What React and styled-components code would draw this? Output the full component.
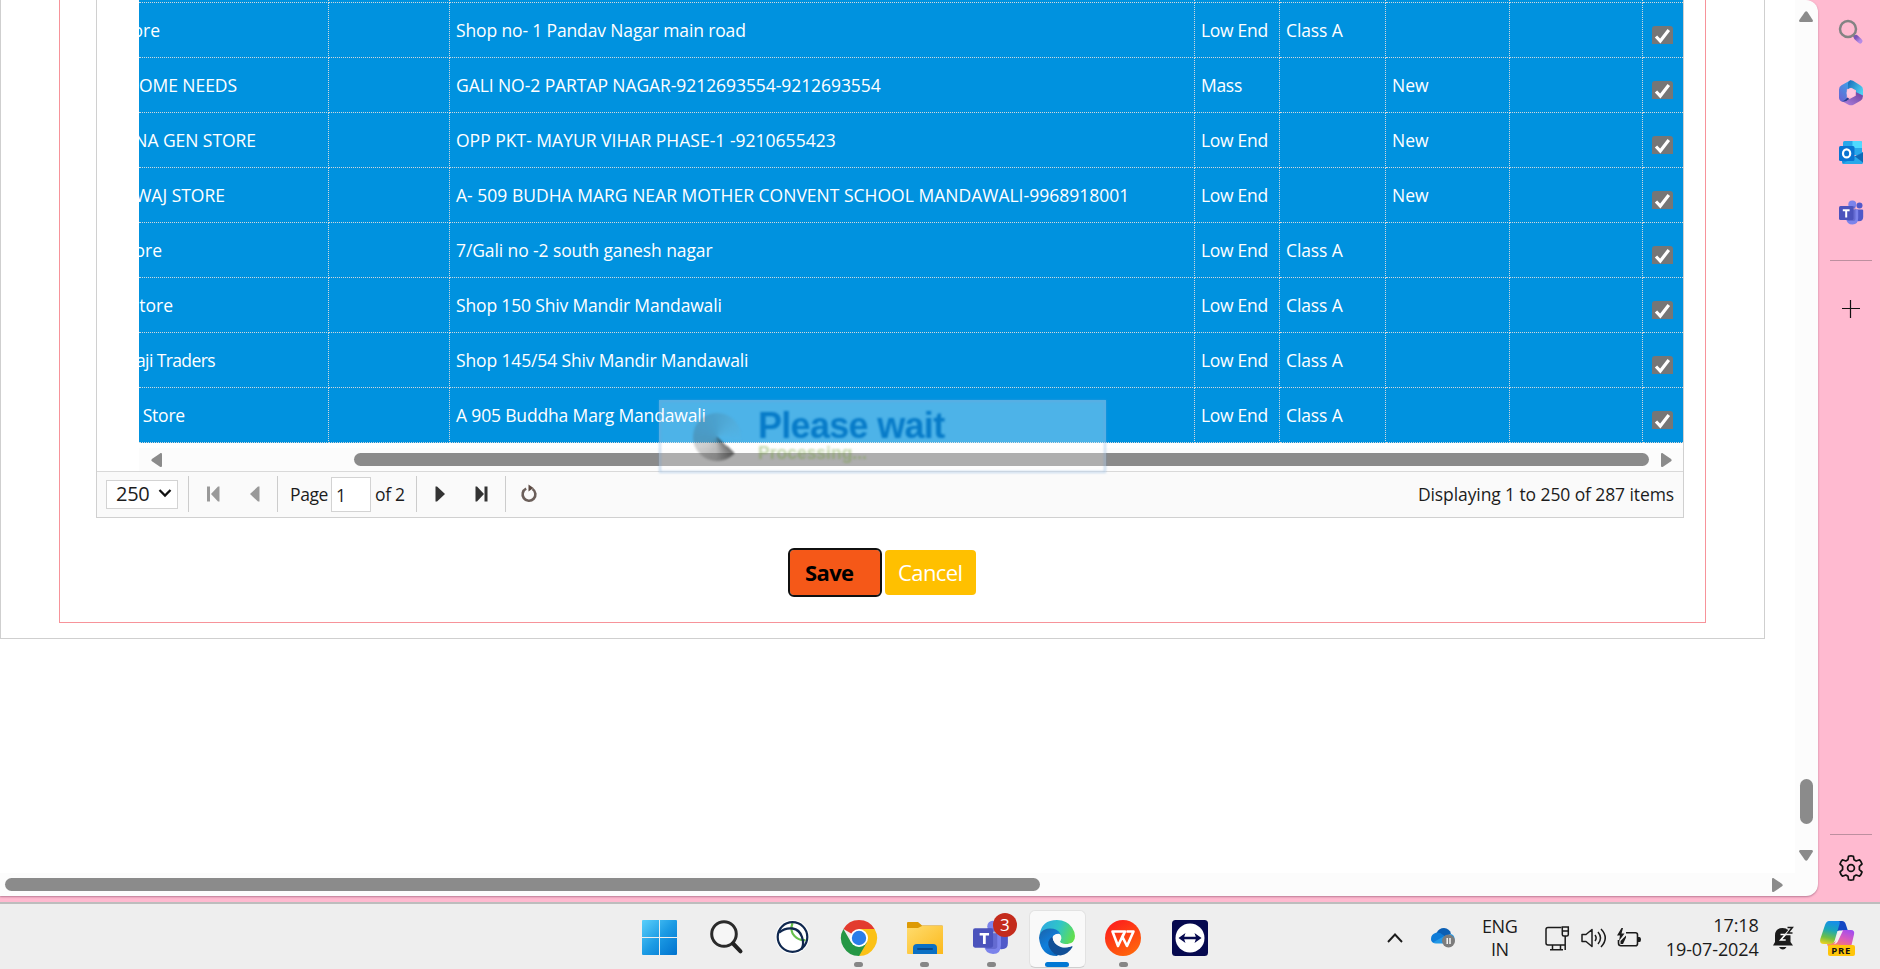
import React from "react";
import styled, { createGlobalStyle, css } from "styled-components";

const GlobalStyle = createGlobalStyle`
  * { box-sizing: border-box; }
  body { margin: 0; overflow: hidden; font-family: "Open Sans", "Noto Sans", sans-serif; }
  svg { display: block; flex: none; overflow: visible; }
`;

const Screen = styled.div`
  width: 1880px;
  height: 969px;
  display: flex;
  flex-direction: column;
  overflow: hidden;
  background: #eeeeee;
`;

/* ---------- browser ---------- */
const Browser = styled.div`
  height: 904px;
  flex: none;
  display: flex;
  align-items: flex-start;
  background: #ffbad0;
  border-bottom: 2px solid #bdbdbd;
`;

const PageWindow = styled.div`
  width: 1818px;
  height: 896px;
  display: grid;
  grid-template-columns: 1795px 23px;
  grid-template-rows: 873px 23px;
  background: #fcfcfc;
  border-radius: 0 12px 12px 0;
  overflow: hidden;
  box-shadow: 0 1px 2px rgba(120, 60, 90, 0.5);
`;

const Viewport = styled.main`
  background: #fff;
  overflow: hidden;
`;

const OuterPanel = styled.section`
  width: 1765px;
  height: 639px;
  padding-left: 58px;
  border: 1px solid #cfcfcf;
  border-top: 0;
`;

const RedFrame = styled.section`
  width: 1647px;
  height: 623px;
  padding-left: 36px;
  border: 1px solid #f7939a;
  border-top: 0;
`;

const GridBox = styled.div`
  width: 1588px;
  height: 518px;
  display: flex;
  flex-direction: column;
  border: 1px solid #d0d0d0;
  border-top: 0;
`;

const GridScroller = styled.div`
  height: 471px;
  flex: none;
  margin-left: 42px;
`;

const Rows = styled.div`
  height: 443px;
  display: flex;
  flex-direction: column;
  justify-content: flex-end;
  overflow: hidden;
`;

const Row = styled.div`
  height: 55px;
  flex: none;
  display: grid;
  grid-template-columns: 190px 121px 745px 85px 106px 124px 133px 40px;
  background: #0092df;
`;

const Cell = styled.div`
  display: flex;
  align-items: center;
  justify-content: ${(p) => (p.$end ? "flex-end" : "flex-start")};
  padding-left: ${(p) => (p.$end ? 0 : "6px")};
  padding-right: ${(p) => p.$end || 0}px;
  min-width: 0;
  overflow: hidden;
  white-space: pre;
  color: #fff;
  font-size: 17.5px;
  letter-spacing: ${(p) => p.$track || 0}px;
  border-right: 1px dotted #d3d8dc;
  border-bottom: 1px dotted #d3d8dc;
  &:last-child { border-right: 0; padding: 7px 0 0 9px; }
`;

const CheckMark = styled.span`
  width: 21px;
  height: 18px;
  margin-top: 2px;
  border-radius: 3px 3px 0 0;
  background: #767676;
`;

const HScroll = styled.div`
  height: 23px;
  margin-top: 5px;
  display: flex;
  align-items: center;
  padding: 0 11px 0 12px;
  background: #fcfcfc;
`;

const HThumb = styled.div`
  width: ${(p) => p.$w}px;
  height: 13px;
  margin-left: ${(p) => p.$gap || 0}px;
  margin-right: auto;
  border-radius: 7px;
  background: #8b8b8b;
`;

const Pager = styled.div`
  flex: 1;
  display: flex;
  align-items: center;
  padding: 0 9px 1px;
  border-top: 1px solid #d9d9d9;
  background: #fafafa;
  color: #1c1c1c;
  font-size: 17.5px;
  white-space: nowrap;
`;

const PageSize = styled.div`
  width: 72px;
  height: 29px;
  display: flex;
  align-items: center;
  justify-content: space-between;
  margin-top: 0;
  padding: 0 5px 2px 9px;
  border: 1px solid #d3d3d3;
  background: #fff;
  font-size: 20px;
  letter-spacing: -0.3px;
`;

const Divider = styled.i`
  width: 1px;
  height: 36px;
  margin: 0 ${(p) => p.$r}px 0 ${(p) => p.$l}px;
  background: #cccccc;
`;

const PageInput = styled.div`
  width: 40px;
  height: 35px;
  margin: 0 4px 0 2px;
  padding: 1px 0 0 4px;
  display: flex;
  align-items: center;
  border: 1px solid #d3d3d3;
  background: #fff;
`;

const PagerText = styled.span`
  letter-spacing: ${(p) => p.$track || 0}px;
  width: ${(p) => (p.$w ? p.$w + "px" : "auto")};
`;

const Gap = styled.span`
  width: ${(p) => p.$w}px;
`;

const Status = styled.span`
  margin-left: auto;
  letter-spacing: -0.1px;
`;

const Actions = styled.div`
  display: flex;
  margin: 32px 0 0 694px;
  gap: 5px;
`;

const button = css`
  height: 45px;
  padding: 0 0 1px;
  border: 0;
  border-radius: 4px;
  font-family: inherit;
  font-size: 22px;
  line-height: 45px;
  text-align: left;
`;

const SaveButton = styled.button`
  ${button}
  width: 90px;
  padding-left: 15px;
  color: #000;
  background: #f55818;
  outline: 2px solid #101010;
  outline-offset: 0;
  font-weight: 700;
  letter-spacing: -0.6px;
`;

const CancelButton = styled.button`
  ${button}
  width: 91px;
  padding-left: 13px;
  color: #fff;
  background: #ffc000;
  letter-spacing: -0.6px;
`;

/* The wait message floats over the grid */
const WaitOverlay = styled.div`
  position: absolute;
  left: 659px;
  top: 400px;
  width: 447px;
  height: 73px;
  display: flex;
  align-items: flex-start;
  padding: 10px 0 0 34px;
  background: rgba(255, 255, 255, 0.3);
  font-family: "Liberation Sans", Arial, sans-serif;
  font-weight: 700;
  &::after {
    content: "";
    position: absolute;
    inset: 0;
    border: 2px solid rgba(115, 165, 215, 0.4);
    filter: blur(1px);
  }
`;

const Spinner = styled.div`
  width: 48px;
  height: 48px;
  margin-top: 3px;
  border-radius: 50%;
  filter: blur(0.9px);
  background: conic-gradient(
    from 132deg,
    rgba(25, 25, 25, 0.62) 0deg,
    rgba(60, 60, 60, 0.35) 50deg,
    rgba(75, 75, 75, 0.26) 110deg,
    rgba(70, 100, 120, 0.3) 160deg,
    rgba(70, 110, 130, 0.26) 220deg,
    rgba(110, 150, 165, 0.16) 280deg,
    rgba(150, 200, 220, 0.05) 320deg,
    transparent 340deg
  );
`;

const WaitText = styled.div`
  display: flex;
  flex-direction: column;
  margin-left: 17px;
  filter: blur(0.8px);
`;

const WaitTitle = styled.span`
  margin-top: -1px;
  font-size: 36px;
  line-height: 34px;
  letter-spacing: -0.7px;
  color: #077bc8;
`;

const WaitSub = styled.span`
  font-size: 17.5px;
  line-height: 20px;
  letter-spacing: 0;
  color: rgba(105, 155, 40, 0.38);
`;

const VScroll = styled.div`
  display: flex;
  flex-direction: column;
  align-items: center;
  padding: 11px 1px 12px 0;
`;

const VThumb = styled.div`
  width: 13px;
  height: 45px;
  margin: auto 0 26px;
  border-radius: 7px;
  background: #8b8b8b;
`;

const PageHScroll = styled.div`
  display: flex;
  align-items: center;
  padding: 0 12px 0 5px;
`;

/* ---------- sidebar ---------- */
const Sidebar = styled.aside`
  width: 62px;
  height: 902px;
  display: flex;
  flex-direction: column;
  align-items: center;
  padding: 19px 0 21px 4px;
`;

const SideIcon = styled.div`
  width: 26px;
  height: 26px;
  margin-bottom: ${(p) => p.$mb || 0}px;
  display: flex;
  align-items: center;
  justify-content: center;
`;

const SideRule = styled.hr`
  width: 42px;
  height: 1px;
  flex: none;
  margin: ${(p) => p.$m};
  border: 0;
  background: #bd8f9f;
`;

/* ---------- taskbar ---------- */
const Taskbar = styled.footer`
  height: 65px;
  display: flex;
  background: #eeeeee;
  padding-left: 627px;
  color: #1b1b1b;
`;

const Slot = styled.div`
  position: relative;
  width: 66.2px;
  display: flex;
  flex-direction: column;
  align-items: center;
  padding-top: 16px;
`;

const ActiveTile = styled.div`
  width: 57px;
  height: 58px;
  margin-top: -10px;
  padding-top: 9px;
  display: flex;
  flex-direction: column;
  align-items: center;
  border: 1px solid #e2e2e2;
  border-bottom-color: #cfcfcf;
  border-radius: 6px;
  background: #f9f9f9;
`;

const Running = styled.i`
  width: ${(p) => (p.$active ? 24 : 9)}px;
  height: 5px;
  flex: none;
  margin-top: 6px;
  border-radius: 3px;
  background: ${(p) => (p.$active ? "#0078d4" : "#868686")};
`;

const Badge = styled.span`
  position: absolute;
  left: 35px;
  top: 9px;
  width: 24px;
  height: 24px;
  border-radius: 50%;
  background: #c42b1c;
  color: #fff;
  font-size: 17px;
  line-height: 23px;
  text-align: center;
`;

const Tray = styled.div`
  display: flex;
  align-items: center;
  height: 65px;
  margin-left: 164px;
  padding-top: 3px;
`;

const Language = styled.div`
  width: 40px;
  margin: 0 25px 0 25px;
  text-align: center;
  font-size: 18px;
  line-height: 23px;
  letter-spacing: -0.5px;
`;

const Clock = styled.div`
  width: 100px;
  margin: -3px 14px 0 17px;
  text-align: right;
  font-size: 18px;
  line-height: 24px;
  letter-spacing: -0.1px;
`;

const Copilot = styled.div`
  display: flex;
  flex-direction: column;
  width: 35px;
  height: 35px;
  margin-left: 26px;
`;

const PreTag = styled.span`
  position: relative;
  width: 27px;
  height: 11px;
  margin: -11px 0 0 8px;
  border-radius: 2px;
  background: #ffc50a;
  color: #111;
  font-size: 9.5px;
  font-weight: 700;
  line-height: 11px;
  letter-spacing: 0.8px;
  text-align: center;
`;

/* ---------- drawings ---------- */
const arrows = {
  left: [11, 14, "M11 1.5v11c0 1.5-1 1.8-2 1.2L.9 8.3q-1.3-1.1 0-2.4L9 .4C10-.3 11 0 11 1.5z"],
  right: [11, 14, "M0 1.5v11c0 1.5 1 1.8 2 1.2l8.1-5.4q1.3-1.1 0-2.4L2 .4C1-.3 0 0 0 1.5z"],
  up: [14, 11, "M1.5 11h11c1.5 0 1.8-1 1.2-2L8.5 1q-1.3-1.5-2.6 0L.3 9c-.6 1-.3 2 1.2 2z"],
  down: [14, 11, "M1.5 0h11c1.5 0 1.8 1 1.2 2L8.5 10q-1.3 1.5-2.6 0L.3 2C-.3 1 0 0 1.5 0z"],
};

const Arrow = ({ dir }) => {
  const [w, h, d] = arrows[dir];
  return (
    <svg width={w} height={h} viewBox={`0 0 ${w} ${h}`}>
      <path d={d} fill="#8b8b8b" />
    </svg>
  );
};

const CheckIcon = () => (
  <svg width="21" height="18" viewBox="0 0 21 18">
    <path d="M4 10.500l4.300 4.500L16.800 4" fill="none" stroke="#fff" strokeWidth="3.200" />
  </svg>
);

const PagerIcon = ({ kind }) => {
  const color = kind === "first" || kind === "prev" ? "#999" : "#333";
  return (
    <svg width="16" height="16" viewBox="0 0 16 16" fill={color}>
      {kind === "first" && <path d="M1 .5h3v15H1zM13.500 .5v15H12L5 8l7-7.500z" />}
      {kind === "prev" && <path d="M12.500 .5v15H11L3 8l8-7.500z" />}
      {kind === "next" && <path d="M3.500 .5v15H5L13 8 5 .5z" />}
      {kind === "last" && <path d="M1.500 .5v15H3L10 8 3 .5zM10.500 .5h3v15h-3z" />}
      {kind === "reload" && (
        <g>
          <path d="M5.200 2.600A6.400 6.400 0 1 0 11.500 3" fill="none" stroke="#6b5f5a" strokeWidth="2.600" />
          <path d="M7.500-1.500v7L12.500 2z" fill="#5c4a43" />
        </g>
      )}
    </svg>
  );
};

const SearchGlass = () => (
  <svg width="26" height="26" viewBox="0 0 26 26">
    <defs>
      <linearGradient id="handle" x1="0" y1="0" x2="1" y2="1">
        <stop offset="0" stopColor="#7a55b8" />
        <stop offset="1" stopColor="#b68be6" />
      </linearGradient>
    </defs>
    <path d="M15 16l4 4" stroke="#777" strokeWidth="2" />
    <circle cx="10" cy="10" r="8" fill="none" stroke="#838383" strokeWidth="2.500" />
    <path d="M18.200 18.500l3.800 3.500" stroke="url(#handle)" strokeWidth="5" strokeLinecap="round" />
  </svg>
);

const Office = () => (
  <svg width="26" height="26" viewBox="0 0 26 26">
    <defs>
      <linearGradient id="offA" x1="0" y1="1" x2=".6" y2="0">
        <stop offset="0" stopColor="#6d5fd0" />
        <stop offset="1" stopColor="#3d9fe8" />
      </linearGradient>
      <linearGradient id="offB" x1="0" y1="0" x2="1" y2=".6">
        <stop offset="0" stopColor="#1769b8" />
        <stop offset="1" stopColor="#4fd2f2" />
      </linearGradient>
      <linearGradient id="offC" x1="0" y1="1" x2="1" y2="0">
        <stop offset="0" stopColor="#b082e0" />
        <stop offset="1" stopColor="#6a3f9e" />
      </linearGradient>
    </defs>
    <path d="M13 0l-9.500 5.300Q1 6.800 1 9.500v8q0 3 3 4.200 2 .5 3.800-.7l2-1.300-1-2V9.500l4.200-2.700z" fill="url(#offA)" />
    <path d="M10 3v6l3-1.200 5 2.500v6l5.500 1.500Q25 17 25 15V9.500q0-2.700-2.500-4L15 .8Q11-.8 10 3z" fill="url(#offB)" />
    <path d="M4 21.200q3.500.8 5.500-1l3.500-2 4.800-2.500V12l7.200 3.500q0 3.700-2.500 5.200l-7 4q-2.500 1.300-5 0z" fill="url(#offC)" />
    <path d="M4 21.200q3.500.8 5.500-1l2-1.200-2-1.500-2 2q-1.500 1.500-3.500 1.700z" fill="#2a3c91" />
    <circle cx="13" cy="13" r="4.400" fill="#ffc7e0" />
  </svg>
);

const Outlook = () => (
  <svg width="26" height="26" viewBox="0 0 26 26">
    <rect x="5" y="1" width="19" height="14" rx="1.500" fill="#28a8ea" />
    <path d="M14.500 1h8q1.500 0 1.500 1.500V8h-9.500z" fill="#50d9ff" />
    <path d="M5 8h9.500v6H5z" fill="#0364b8" />
    <path d="M4 13l11 4 10-5v10q0 2-2 2H6q-2 0-2-2z" fill="#1490df" />
    <path d="M4 24L25 12.500V22q0 2-2 2z" fill="#28a8ea" />
    <path d="M17 16.500l8 6V12.500z" fill="#1068b5" />
    <rect x="1" y="6" width="15.500" height="15" rx="1.500" fill="#0a74d1" />
    <ellipse cx="8.600" cy="13.400" rx="3.600" ry="4" fill="none" stroke="#fff" strokeWidth="2.200" />
  </svg>
);

const Teams = ({ size, big }) => (
  <svg width={size} height={size} viewBox="0 0 26 26">
    <circle cx="21.500" cy="5.500" r="3" fill="#5059c9" />
    <circle cx="14.300" cy="4.500" r="4" fill="#7b83eb" />
    <path d="M17 9.500h7q1.200 0 1.200 1.200v6q0 4.500-4.500 4.500-2.500 0-4-1.500z" fill="#5059c9" />
    <path d="M8 9.500h11q1.200 0 1.200 1.300V18q0 6.500-5.700 6.500T8 18.500z" fill="#7b83eb" />
    <path d="M10 6h5q2.500 0 2.500 2v11q0 2-2 2H9.500z" fill="#3940a0" opacity=".35" />
    <rect x={big ? 0 : 1} y="6" width="14.500" height="14" rx="1.500" fill="#4b53bc" />
    <path d="M4.800 9.300h6.800v1.900H9.200v6.200H7.200v-6.200H4.800z" fill="#fff" />
  </svg>
);

const Plus = () => (
  <svg width="18" height="18" viewBox="0 0 18 18">
    <path d="M8.500 0v18M0 8.500h18" stroke="#111" strokeWidth="1.200" />
  </svg>
);

const Gear = () => (
  <svg width="24" height="26" viewBox="0 0 24 26" fill="none" stroke="#111" strokeWidth="1.700" strokeLinejoin="round">
    <path d="M9.600 1.200Q12 .600 14.400 1.200L15 4.700 17.200 6 20.600 4.800Q22.400 6.600 23 9L20.400 11.300V14.700L23 17Q22.400 19.400 20.600 21.200L17.200 20 15 21.300 14.400 24.800Q12 25.400 9.600 24.800L9 21.300 6.800 20 3.400 21.200Q1.600 19.400 1 17L3.600 14.700V11.300L1 9Q1.600 6.600 3.400 4.800L6.800 6 9 4.700z" />
    <circle cx="12" cy="13" r="3.400" />
  </svg>
);

const WindowsLogo = () => (
  <svg width="36" height="35" viewBox="0 0 36 35">
    <defs>
      <linearGradient id="win" x1="0" y1="0" x2="35" y2="35" gradientUnits="userSpaceOnUse">
        <stop offset="0" stopColor="#5ad0fb" />
        <stop offset=".5" stopColor="#1c9be4" />
        <stop offset="1" stopColor="#0072ce" />
      </linearGradient>
    </defs>
    <path d="M1 0h16v17H0V1q0-1 1-1zM18 0h16q1 0 1 1v16H18zM0 18h17v17H1q-1 0-1-1zM18 18h17v16q0 1-1 1H18z" fill="url(#win)" />
  </svg>
);

const TaskSearch = () => (
  <svg width="32" height="34" viewBox="0 0 32 34">
    <circle cx="14" cy="14" r="12.300" fill="#f6f6f6" stroke="#2b2b2b" strokeWidth="3" />
    <path d="M23 23.500l7.500 7.800" stroke="#222" strokeWidth="4" strokeLinecap="round" />
  </svg>
);

const Globe = () => (
  <svg width="34" height="34" viewBox="-0.500 0 34 34">
    <circle cx="17" cy="17" r="17" fill="#fff" />
    <path d="M17 3q-3 8 2 13t11 4" fill="none" stroke="#67c04b" strokeWidth="2.200" />
    <circle cx="17" cy="17" r="14.800" fill="none" stroke="#10284f" strokeWidth="2.200" />
    <path d="M3.500 12.500Q10 7.500 17 8.500T26.500 17t-.7 12.500" fill="none" stroke="#10284f" strokeWidth="2.300" />
  </svg>
);

const Chrome = () => (
  <svg width="36" height="36" viewBox="0 0 36 36">
    <path d="M18 18L2.410 9A18 18 0 0 1 33.590 9z" fill="#e33b2e" />
    <path d="M18 9H33.590A18 18 0 0 1 18 36l7.790-13.500z" fill="#fbc116" />
    <path d="M10.200 22.500L2.410 9A18 18 0 0 0 18 36l7.790-13.500z" fill="#259745" />
    <path d="M18 18l7.790 4.500L18 36z" fill="#fbc116" />
    <path d="M18 9h15.590l-5 9H18z" fill="#fbc116" />
    <path d="M18 26.500l7.790-4L18 36l-3-9z" fill="#259745" />
    <circle cx="18" cy="18" r="9" fill="#fff" />
    <circle cx="18" cy="18" r="7.200" fill="#2b7de9" />
  </svg>
);

const Folder = () => (
  <svg width="36" height="36" viewBox="0 0 36 36">
    <defs>
      <linearGradient id="fold" x1="0" y1="0" x2="1" y2="1">
        <stop offset="0" stopColor="#ffdc6e" />
        <stop offset="1" stopColor="#fcb91c" />
      </linearGradient>
    </defs>
    <path d="M0 3q0-1 1-1h10l4 3.500h20q1 0 1 1V15H0z" fill="#dd9a05" />
    <path d="M0 8h11l4-2h21v28H1q-1 0-1-1z" fill="url(#fold)" />
    <path d="M6 34V28q0-4 4-4h16q4 0 4 4v6z" fill="#0c70c4" />
    <path d="M11 29h14" stroke="#084a8c" strokeWidth="2" strokeLinecap="round" />
  </svg>
);

const Edge = () => (
  <svg width="36" height="36" viewBox="0 0 36 36">
    <defs>
      <linearGradient id="edTop" x1="0" y1=".3" x2="1" y2=".6">
        <stop offset="0" stopColor="#2fa9e0" />
        <stop offset=".5" stopColor="#2fc5c8" />
        <stop offset="1" stopColor="#62df4c" />
      </linearGradient>
      <linearGradient id="edBlue" x1="0" y1="0" x2=".6" y2="1">
        <stop offset="0" stopColor="#1c62a8" />
        <stop offset=".6" stopColor="#0f7fdc" />
        <stop offset="1" stopColor="#0a6ac0" />
      </linearGradient>
    </defs>
    <path d="M.5 15Q2.500 0 18 0q10 0 15 7.500Q36 12 36 16q0 7-7.500 8-5 .3-7-1.200-1-1 .3-2.800 1.500-3.500-1.300-6-2.500-3.300-8-3.500Q5 10.500.5 15z" fill="url(#edTop)" />
    <path d="M0 18q.5-7.500 8-9.300Q18 7.500 21.500 14q-6-1.200-8 4.500-2 9 6.500 15.500l-2 2Q2 36 0 18z" fill="url(#edBlue)" />
    <path d="M13.500 16.500Q7 21 10.500 28q4 7.500 11 7.500 8-1.500 12-8.500.3-1.200-1-.7-5 2-10.500.2-8-3-8.500-10z" fill="#114f97" />
    <path d="M18 14.200q4 .2 4.200 4 0 1-.9 2.300-.8 1.300.3 2.300 2 1.700 6.500 1.400 4.500-.3 6-2-.3 3-2 4-6 2.700-11.500.2-6.500-3-7-9 .5-3 4.400-3.200z" fill="#fafafa" />
  </svg>
);

const Wps = () => (
  <svg width="36" height="36" viewBox="0 0 36 36">
    <defs>
      <linearGradient id="wps" x1=".2" y1="0" x2=".8" y2="1">
        <stop offset="0" stopColor="#fd1c1c" />
        <stop offset="1" stopColor="#ff6a0b" />
      </linearGradient>
    </defs>
    <circle cx="18" cy="18" r="18" fill="url(#wps)" />
    <path d="M14.500 11.500H7.500L13 26l5.500-12M13 11.500h7L17.500 17 22 26l6.500-14.500h-7" fill="none" stroke="#fff" strokeWidth="2.600" strokeLinejoin="round" />
  </svg>
);

const TeamViewer = () => (
  <svg width="36" height="36" viewBox="0 0 36 36">
    <rect width="36" height="36" rx="3.500" fill="#06094f" />
    <circle cx="18" cy="18" r="14.500" fill="#fff" />
    <path d="M6.500 18l7-5-1.300 3.700h11.600L22.500 13l7 5-7 5 1.300-3.700H12.200l1.300 3.700z" fill="#06094f" />
  </svg>
);

const Chevron = () => (
  <svg width="16" height="10" viewBox="0 0 16 10">
    <path d="M1 9l7-7.500L15 9" fill="none" stroke="#1b1b1b" strokeWidth="1.900" />
  </svg>
);

const OneDrive = () => (
  <svg width="24" height="20" viewBox="0 0 24 20">
    <path d="M5.500 5Q8 0 13 0q5.500.500 7 5.500l-6 5z" fill="#0b5fb4" />
    <path d="M0 11Q0 6 5 4.700q4-.500 7 2.300l6 3.500L3 15Q0 14 0 11z" fill="#0e7cd8" />
    <path d="M2 14.500L12.500 8.500 20 6q3.500 1 3.500 4.500 0 5-4 5H5q-2 0-3-1z" fill="#2499e6" />
    <circle cx="17.500" cy="13" r="6.500" fill="#7c7c7c" />
    <path d="M16.200 10v6M19 10v6" stroke="#fff" strokeWidth="1.400" />
  </svg>
);

const Monitor = () => (
  <svg width="24" height="25" viewBox="0 0 24 25" fill="none" stroke="#1b1b1b" strokeWidth="1.500">
    <path d="M16.500 1.500H3Q1 1.500 1 3.500V17q0 2 2 2h17.500M7.500 19.500V23.500M15.500 19.500V23.500M5 23.800h13M20.200 10v14" />
    <path d="M17.300 1h6v7.500q0 1.500-1.500 1.500h-3q-1.500 0-1.500-1.500zM17.500 5h5.500" />
  </svg>
);

const Speaker = () => (
  <svg width="25" height="20" viewBox="0 0 25 20" fill="none" stroke="#1b1b1b" strokeWidth="1.500" strokeLinejoin="round">
    <path d="M1 6.500h4L11 1.500v17L5 13.500H1z" />
    <path d="M14 7q2.300 3 0 6M17 4q5 6 0 12M20 1q8.500 9 0 18" />
  </svg>
);

const Battery = () => (
  <svg width="25" height="20" viewBox="0 0 25 20">
    <path d="M9 4.800h9.500q2 0 2 2v9q0 2-2 2H4q-2.500 0-2.500-2.500V12" fill="none" stroke="#1b1b1b" strokeWidth="1.600" />
    <path d="M21 9h1.500q1.500 0 1.500 2.500T22.500 14H21zM3.500 16V13L9 7.500v2L6 16z" fill="#1b1b1b" />
    <path d="M4.500 0L0 7.500h3L2 13l5.500-7.500h-3L6 0z" fill="#1b1b1b" />
  </svg>
);

const Bell = () => (
  <svg width="21" height="24" viewBox="0 0 21 24">
    <path d="M2 16V9.500Q2 2 9.500 2q8 0 8 8v6l2.500 3.500H0z" fill="#1b1b1b" />
    <path d="M6 21h7.500q-1.500 2.500-3.700 2.500T6 21z" fill="#1b1b1b" />
    <path d="M7.500 8.500h5l-4.800 5.500h5" fill="none" stroke="#fff" strokeWidth="1.600" />
    <path d="M13.500 1.500h6l-5 6h5" fill="none" stroke="#eee" strokeWidth="3.500" />
    <path d="M14.500 1.500h4.800l-4.300 5.500h4.500" fill="none" stroke="#1b1b1b" strokeWidth="1.600" />
  </svg>
);

const CopilotLogo = () => (
  <svg width="35" height="35" viewBox="0 0 35 35">
    <defs>
      <linearGradient id="cpL" x1=".4" y1="0" x2=".2" y2="1">
        <stop offset="0" stopColor="#178fe6" />
        <stop offset=".35" stopColor="#1aa7b8" />
        <stop offset=".7" stopColor="#6fbf45" />
        <stop offset="1" stopColor="#f1d21e" />
      </linearGradient>
      <linearGradient id="cpR" x1=".8" y1="0" x2=".2" y2="1">
        <stop offset="0" stopColor="#a04df0" />
        <stop offset=".5" stopColor="#d85abf" />
        <stop offset="1" stopColor="#fb7b6c" />
      </linearGradient>
    </defs>
    <path d="M9 0h13q3 0 4 4l2 6H17z" fill="#1348c4" />
    <path d="M22 9h9q4 0 3 4.500L31.500 24H10q-2-1 2-2 4-.500 5-4z" fill="url(#cpR)" />
    <path d="M7 23h12v5H11q-3-1-4-5z" fill="#fb8a62" />
    <path d="M9 0h9q2.500 0 1.500 3l-5 17q-1 3-4 3H4q-5 0-3.700-5L5 4Q6.500 0 9 0z" fill="url(#cpL)" />
    <path d="M18.500 9.500H23L17.500 21q-1 2-4 2 2-1 2.500-3.500z" fill="#f4eef2" />
  </svg>
);

/* ---------- data ---------- */
/* `end` is the distance from the end of the name to the column's right rule */
const rows = [
  {},
  { name: "ore", end: 168, address: "Shop no- 1 Pandav Nagar main road", track: -0.14, type: "Low End", cls: "Class A" },
  { name: "OME NEEDS", end: 91, nameTrack: -0.05, address: "GALI NO-2 PARTAP NAGAR-9212693554-9212693554", track: -0.07, type: "Mass", status: "New" },
  { name: "NA GEN STORE", end: 72, nameTrack: -0.05, address: "OPP PKT- MAYUR VIHAR PHASE-1 -9210655423", track: 0.01, type: "Low End", status: "New" },
  { name: "WAJ STORE", end: 103, address: "A- 509 BUDHA MARG NEAR MOTHER CONVENT SCHOOL MANDAWALI-9968918001", track: 0.01, type: "Low End", status: "New" },
  { name: "ore", end: 166, address: "7/Gali no -2 south ganesh nagar", track: -0.1, type: "Low End", cls: "Class A" },
  { name: "Store", end: 155, address: "Shop 150 Shiv Mandir Mandawali", track: -0.16, type: "Low End", cls: "Class A" },
  { name: "aji Traders", end: 113, nameTrack: -0.6, address: "Shop 145/54 Shiv Mandir Mandawali", track: -0.14, type: "Low End", cls: "Class A" },
  { name: " Store", end: 143, nameTrack: -0.2, address: "A 905 Buddha Marg Mandawali", track: -0.16, type: "Low End", cls: "Class A" },
];

export default function App() {
  return (
    <Screen>
      <GlobalStyle />
      <Browser>
        <PageWindow>
          <Viewport>
            <OuterPanel>
              <RedFrame>
                <GridBox>
                  <GridScroller>
                    <Rows>
                      {rows.map((r, i) => (
                        <Row key={i}>
                          <Cell $end={r.end} $track={r.nameTrack}>{r.name}</Cell>
                          <Cell />
                          <Cell $track={r.track}>{r.address}</Cell>
                          <Cell $track={-0.3}>{r.type}</Cell>
                          <Cell $track={-0.12}>{r.cls}</Cell>
                          <Cell>{r.status}</Cell>
                          <Cell />
                          <Cell>
                            <CheckMark>
                              <CheckIcon />
                            </CheckMark>
                          </Cell>
                        </Row>
                      ))}
                    </Rows>
                    <HScroll>
                      <Arrow dir="left" />
                      <HThumb $w={1295} $gap={192} />
                      <Arrow dir="right" />
                    </HScroll>
                  </GridScroller>
                  <Pager>
                    <PageSize>
                      250
                      <svg width="14" height="8" viewBox="0 0 14 8">
                        <path d="M1.500 1l5.500 5.500L12.500 1" fill="none" stroke="#111" strokeWidth="2.300" />
                      </svg>
                    </PageSize>
                    <Divider $l={10} $r={17} />
                    <PagerIcon kind="first" />
                    <Gap $w={25} />
                    <PagerIcon kind="prev" />
                    <Divider $l={14} $r={12} />
                    <PagerText $w={39} $track={-0.4}>Page</PagerText>
                    <PageInput>1</PageInput>
                    <PagerText $w={31} $track={-0.3}>of 2</PagerText>
                    <Divider $l={10} $r={15} />
                    <PagerIcon kind="next" />
                    <Gap $w={26} />
                    <PagerIcon kind="last" />
                    <Divider $l={15} $r={15} />
                    <PagerIcon kind="reload" />
                    <Status>Displaying 1 to 250 of 287 items</Status>
                  </Pager>
                </GridBox>
                <Actions>
                  <SaveButton>Save</SaveButton>
                  <CancelButton>Cancel</CancelButton>
                </Actions>
              </RedFrame>
            </OuterPanel>
          </Viewport>
          <VScroll>
            <Arrow dir="up" />
            <VThumb />
            <Arrow dir="down" />
          </VScroll>
          <PageHScroll>
            <HThumb $w={1035} />
            <Arrow dir="right" />
          </PageHScroll>
        </PageWindow>
        <Sidebar>
          <SideIcon $mb={35}><SearchGlass /></SideIcon>
          <SideIcon $mb={34}><Office /></SideIcon>
          <SideIcon $mb={34}><Outlook /></SideIcon>
          <SideIcon $mb={34}><Teams size={26} /></SideIcon>
          <SideRule $m="0 0 35px" />
          <SideIcon><Plus /></SideIcon>
          <SideRule $m="auto 0 20px" />
          <SideIcon><Gear /></SideIcon>
        </Sidebar>
      </Browser>

      <WaitOverlay>
        <Spinner />
        <WaitText>
          <WaitTitle>Please wait</WaitTitle>
          <WaitSub>Processing...</WaitSub>
        </WaitText>
      </WaitOverlay>

      <Taskbar>
        <Slot><WindowsLogo /></Slot>
        <Slot><TaskSearch /></Slot>
        <Slot><Globe /></Slot>
        <Slot><Chrome /><Running /></Slot>
        <Slot><Folder /><Running /></Slot>
        <Slot>
          <Teams size={36} big />
          <Running />
          <Badge>3</Badge>
        </Slot>
        <Slot>
          <ActiveTile>
            <Edge />
            <Running $active />
          </ActiveTile>
        </Slot>
        <Slot><Wps /><Running /></Slot>
        <Slot><TeamViewer /></Slot>
        <Tray>
          <Chevron />
          <Gap $w={28} />
          <OneDrive />
          <Language>ENG<br />IN</Language>
          <Monitor />
          <Gap $w={12} />
          <Speaker />
          <Gap $w={11} />
          <Battery />
          <Clock>17:18<br />19-07-2024</Clock>
          <Bell />
          <Copilot>
            <CopilotLogo />
            <PreTag>PRE</PreTag>
          </Copilot>
        </Tray>
      </Taskbar>
    </Screen>
  );
}
